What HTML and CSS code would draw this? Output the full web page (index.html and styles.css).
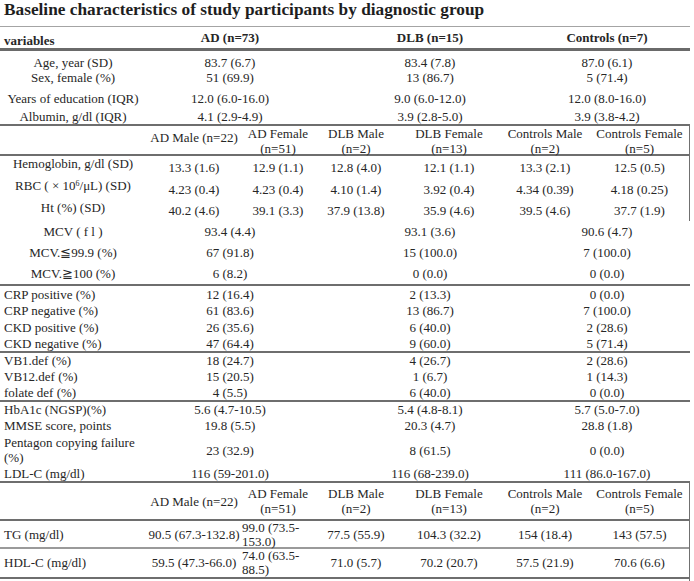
FILE: index.html
```html
<!DOCTYPE html>
<html lang="en">
<head>
<meta charset="utf-8">
<title>Baseline characteristics</title>
<link rel="stylesheet" href="styles.css">
</head>
<body>
<div class="sheet">
  <h1 class="title">Baseline characteristics of study participants by diagnostic group</h1>

  <section class="block b-main">
    <div class="row g4 head rule3">
      <div class="lab var">variables</div>
      <div class="grp">AD (n=73)</div>
      <div class="grp">DLB (n=15)</div>
      <div class="grp">Controls (n=7)</div>
    </div>
    <div class="row g4 r-age bottom"><div class="lab c">Age, year (SD)</div><div>83.7 (6.7)</div><div>83.4 (7.8)</div><div>87.0 (6.1)</div></div>
    <div class="row g4 r-sex bottom"><div class="lab c">Sex, female (%)</div><div>51 (69.9)</div><div>13 (86.7)</div><div>5 (71.4)</div></div>
    <div class="row g4 r-edu bottom"><div class="lab c">Years of education (IQR)</div><div>12.0 (6.0-16.0)</div><div>9.0 (6.0-12.0)</div><div>12.0 (8.0-16.0)</div></div>
    <div class="row g4 r-alb bottom rule2"><div class="lab c">Albumin, g/dl (IQR)</div><div>4.1 (2.9-4.9)</div><div>3.9 (2.8-5.0)</div><div>3.9 (3.8-4.2)</div></div>
  </section>

  <section class="block box">
    <div class="row g7 sub sub1 rule2">
      <div></div>
      <div class="up">AD Male (n=22)</div>
      <div>AD Female<br>(n=51)</div>
      <div>DLB Male<br>(n=2)</div>
      <div>DLB Female<br>(n=13)</div>
      <div>Controls Male<br>(n=2)</div>
      <div>Controls Female<br>(n=5)</div>
    </div>
    <div class="row g7 r-hb"><div class="lab c top">Hemoglobin, g/dl (SD)</div><div>13.3 (1.6)</div><div>12.9 (1.1)</div><div>12.8 (4.0)</div><div>12.1 (1.1)</div><div>13.3 (2.1)</div><div>12.5 (0.5)</div></div>
    <div class="row g7 r-rbc"><div class="lab c top">RBC ( × 10<sup>6</sup>/μL) (SD)</div><div>4.23 (0.4)</div><div>4.23 (0.4)</div><div>4.10 (1.4)</div><div>3.92 (0.4)</div><div>4.34 (0.39)</div><div>4.18 (0.25)</div></div>
    <div class="row g7 r-ht"><div class="lab c top">Ht (%) (SD)</div><div>40.2 (4.6)</div><div>39.1 (3.3)</div><div>37.9 (13.8)</div><div>35.9 (4.6)</div><div>39.5 (4.6)</div><div>37.7 (1.9)</div></div>
  </section>

  <section class="block">
    <div class="row g4 r-mcv"><div class="lab c">MCV ( f l )</div><div>93.4 (4.4)</div><div>93.1 (3.6)</div><div>90.6 (4.7)</div></div>
    <div class="row g4 r-mcv"><div class="lab c">MCV.≦99.9 (%)</div><div>67 (91.8)</div><div>15 (100.0)</div><div>7 (100.0)</div></div>
    <div class="row g4 r-mcv3 rule2"><div class="lab c">MCV.≧100 (%)</div><div>6 (8.2)</div><div>0 (0.0)</div><div>0 (0.0)</div></div>

    <div class="row g4 r16"><div class="lab">CRP positive (%)</div><div>12 (16.4)</div><div>2 (13.3)</div><div>0 (0.0)</div></div>
    <div class="row g4 r17"><div class="lab">CRP negative (%)</div><div>61 (83.6)</div><div>13 (86.7)</div><div>7 (100.0)</div></div>
    <div class="row g4 r17"><div class="lab">CKD positive (%)</div><div>26 (35.6)</div><div>6 (40.0)</div><div>2 (28.6)</div></div>
    <div class="row g4 r15 rule2"><div class="lab">CKD negative (%)</div><div>47 (64.4)</div><div>9 (60.0)</div><div>5 (71.4)</div></div>

    <div class="row g4 r15"><div class="lab">VB1.def (%)</div><div>18 (24.7)</div><div>4 (26.7)</div><div>2 (28.6)</div></div>
    <div class="row g4 r17"><div class="lab">VB12.def (%)</div><div>15 (20.5)</div><div>1 (6.7)</div><div>1 (14.3)</div></div>
    <div class="row g4 r15 rule2"><div class="lab">folate def (%)</div><div>4 (5.5)</div><div>6 (40.0)</div><div>0 (0.0)</div></div>

    <div class="row g4 r15"><div class="lab">HbA1c (NGSP)(%)</div><div>5.6 (4.7-10.5)</div><div>5.4 (4.8-8.1)</div><div>5.7 (5.0-7.0)</div></div>
    <div class="row g4 r17"><div class="lab">MMSE score, points</div><div>19.8 (5.5)</div><div>20.3 (4.7)</div><div>28.8 (1.8)</div></div>
    <div class="row g4 r-pent"><div class="lab">Pentagon copying failure<br>(%)</div><div>23 (32.9)</div><div>8 (61.5)</div><div>0 (0.0)</div></div>
    <div class="row g4 r15 rule2"><div class="lab">LDL-C (mg/dl)</div><div>116 (59-201.0)</div><div>116 (68-239.0)</div><div>111 (86.0-167.0)</div></div>
  </section>

  <section class="block box">
    <div class="row g7 sub sub2 rule2">
      <div></div>
      <div>AD Male (n=22)</div>
      <div>AD Female<br>(n=51)</div>
      <div>DLB Male<br>(n=2)</div>
      <div>DLB Female<br>(n=13)</div>
      <div>Controls Male<br>(n=2)</div>
      <div>Controls Female<br>(n=5)</div>
    </div>
    <div class="row g7 r-two r-tg rule1"><div class="lab">TG (mg/dl)</div><div class="tight">90.5 (67.3-132.8)</div><div class="wrap">99.0 (73.5-<br>153.0)</div><div>77.5 (55.9)</div><div>104.3 (32.2)</div><div>154 (18.4)</div><div>143 (57.5)</div></div>
    <div class="row g7 r-two r-hdl rule2"><div class="lab">HDL-C (mg/dl)</div><div class="tight">59.5 (47.3-66.0)</div><div class="wrap">74.0 (63.5-<br>88.5)</div><div>71.0 (5.7)</div><div>70.2 (20.7)</div><div>57.5 (21.9)</div><div>70.6 (6.6)</div></div>
    <div class="tail"></div>
  </section>
</div>
</body>
</html>
```

FILE: styles.css
```css
html, body {
  margin: 0;
  padding: 0;
  background: #ffffff;
}

body {
  font-family: "Liberation Serif", "Times New Roman", serif;
  font-size: 13px;
  line-height: 15px;
  color: #262626;
}

.sheet {
  width: 690px;
}

.title {
  margin: 0;
  height: 26px;
  box-sizing: border-box;
  padding: 1px 0 0 4px;
  font-size: 17.3px;
  line-height: 18px;
  font-weight: bold;
  color: #1e1e1e;
}

.block {
  width: 690px;
  box-sizing: border-box;
}

.b-main {
  border-top: 1px solid #a4a4a4;
}

.box {
  border-right: 1px solid #707070;
}

.row {
  display: grid;
  align-items: center;
  text-align: center;
  white-space: nowrap;
}

.g4 { grid-template-columns: 146px 168px 232px 122px; }
.g7 { grid-template-columns: 146px 96px 72px 84px 102px 90px 99px; }

.lab {
  text-align: left;
  padding-left: 4px;
}

.lab.c {
  text-align: center;
  padding-left: 0;
}

.top { align-self: start; }

.bottom { align-items: end; }

.rule1 { border-bottom: 2px solid #9a9a9a; }
.rule2 { border-bottom: 2px solid #6e6e6e; }
.rule3 { border-bottom: 3px solid #6a6a6a; }

.head { height: 21px; }
.head .grp { font-weight: bold; align-self: center; }
.head .var { font-weight: bold; align-self: end; }

.r-age { height: 19px; }
.r-sex { height: 14px; }
.r-edu { height: 22px; }
.r-alb { height: 18px; }

.sub1 { height: 28px; }
.sub2 { height: 36px; }
.up { padding-bottom: 7px; }

.r-hb, .r-rbc { height: 22px; }
.r-ht { height: 21px; }

sup {
  font-size: 8px;
  line-height: 0;
  vertical-align: 4px;
}

.r-mcv { height: 21px; }
.r-mcv3 { height: 21px; }

.r15 { height: 15px; }
.r16 { height: 16px; }
.r17 { height: 17px; }
.r-pent { height: 32px; }

.r-two > div { line-height: 14px; }
.r-tg { height: 26px; }
.r-hdl { height: 28px; }

.tight { padding: 0 1px; }

.wrap {
  text-align: left;
  padding-left: 0;
}

.tail { height: 4px; }
```
